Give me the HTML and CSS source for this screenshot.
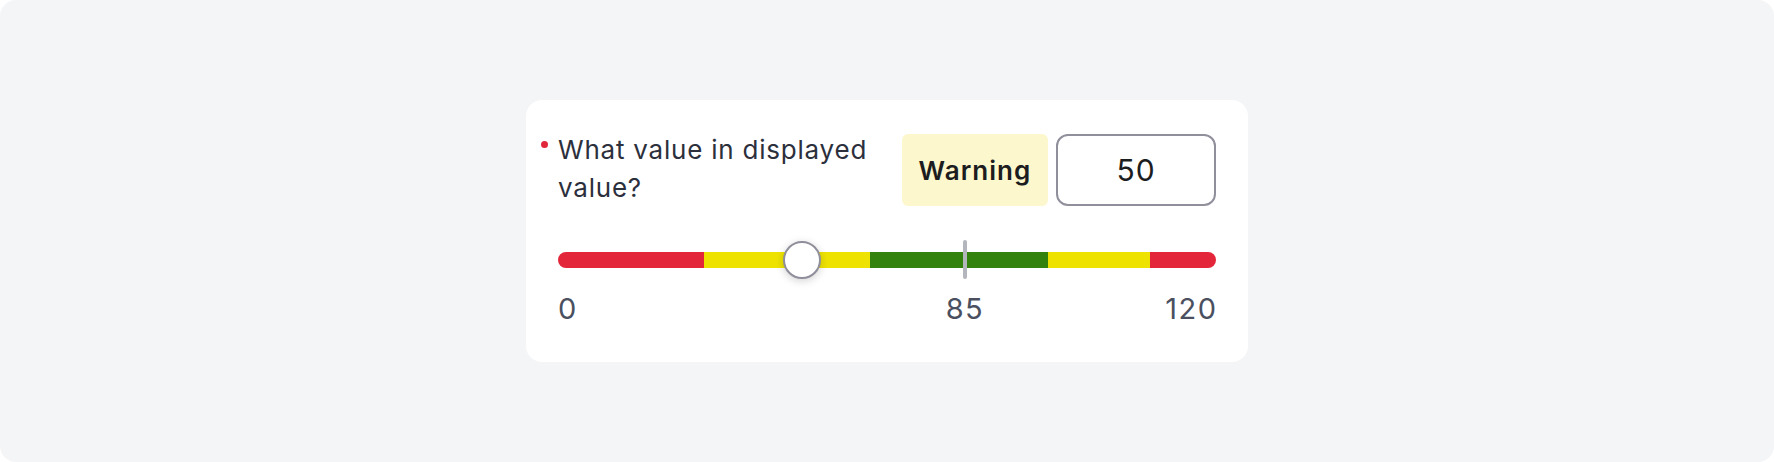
FILE: index.html
```html
<!DOCTYPE html>
<html lang="en">
<head>
<meta charset="UTF-8">
<meta name="viewport" content="width=device-width, initial-scale=1.0">
<title>Gauge Question</title>
<link rel="stylesheet" href="styles.css">
</head>
<body>
<div class="frame">
  <!-- Question card -->
  <div class="card">
    <div class="top-row">
      <div class="question"><span class="req-dot"></span>What value in displayed value?</div>
      <div class="status-badge">Warning</div>
      <input class="value-input" type="text" value="50">
    </div>
    <!-- Colored range slider -->
    <div class="slider">
      <div class="track">
        <div class="seg seg-red" style="width: 22.19%"></div>
        <div class="seg seg-yellow" style="width: 25.23%"></div>
        <div class="seg seg-green" style="width: 27.05%"></div>
        <div class="seg seg-yellow" style="width: 15.5%"></div>
        <div class="seg seg-red" style="width: 10.03%"></div>
      </div>
      <div class="target-mark" style="left: 61.85%"></div>
      <div class="thumb" style="left: 37.08%"></div>
    </div>
    <div class="scale-labels">
      <span>0</span>
      <span class="target-label" style="left: 61.85%">85</span>
      <span class="max-label">120</span>
    </div>
  </div>
</div>
</body>
</html>
```
FILE: styles.css
```css
/* Page frame */
body {
  margin: 0;
  background-color: #ffffff;
  font-family: Inter, "Noto Sans", sans-serif;
}
.frame {
  width: 1774px;
  height: 462px;
  background-color: #f4f5f7;
  border-radius: 16px;
  display: flex;
  justify-content: center;
  align-items: center;
}
/* Card */
.card {
  box-sizing: border-box;
  width: 722px;
  background-color: #ffffff;
  border-radius: 16px;
  padding: 34px 32px 32px 32px;
}
.top-row {
  display: flex;
  align-items: flex-start;
  gap: 8px;
}
.question {
  position: relative;
  flex: 1;
  margin-top: -3px;
  padding-right: 8px;
  font-size: 26px;
  line-height: 38px;
  letter-spacing: 0.03em;
  color: #2c303c;
}
.req-dot {
  position: absolute;
  left: -17px;
  top: 10px;
  width: 7px;
  height: 7px;
  border-radius: 50%;
  background-color: #e0283a;
}
.status-badge {
  width: 146px;
  height: 72px;
  display: flex;
  justify-content: center;
  align-items: center;
  background-color: #fcf7cd;
  border-radius: 6px;
  font-size: 26px;
  font-weight: 600;
  letter-spacing: 0.04em;
  color: #1c1d20;
}
.value-input {
  box-sizing: border-box;
  width: 160px;
  height: 72px;
  border: 2px solid #908f9c;
  border-radius: 12px;
  background: #ffffff;
  font-family: Inter, "Noto Sans", sans-serif;
  font-size: 30px;
  letter-spacing: 0.03em;
  color: #1c1d20;
  text-align: center;
  padding: 0;
  outline: none;
}
/* Slider */
.slider {
  position: relative;
  height: 40px;
  margin-top: 33px;
  display: flex;
  align-items: center;
}
.track {
  display: flex;
  width: 100%;
  height: 16px;
  border-radius: 8px;
  overflow: hidden;
}
.seg {
  height: 100%;
}
.seg-red {
  background-color: #e4263b;
}
.seg-yellow {
  background-color: #eee300;
}
.seg-green {
  background-color: #34820e;
}
.target-mark {
  position: absolute;
  top: 0;
  width: 4px;
  height: 39px;
  margin-left: -2px;
  border-radius: 2px;
  background-color: #b3b6bc;
}
.thumb {
  position: absolute;
  top: 1px;
  box-sizing: border-box;
  width: 38px;
  height: 38px;
  margin-left: -19px;
  border: 2px solid #8f8e9b;
  border-radius: 50%;
  background-color: #ffffff;
  box-shadow: 0 2px 8px rgba(0, 0, 0, 0.18);
}
/* Scale labels */
.scale-labels {
  position: relative;
  display: flex;
  justify-content: space-between;
  margin-top: 8px;
  font-size: 29px;
  line-height: 42px;
  letter-spacing: 0.05em;
  color: #4a5060;
}
.max-label {
  margin-right: -0.05em;
}
.target-label {
  position: absolute;
  top: 0;
  transform: translateX(-50%);
}
```
